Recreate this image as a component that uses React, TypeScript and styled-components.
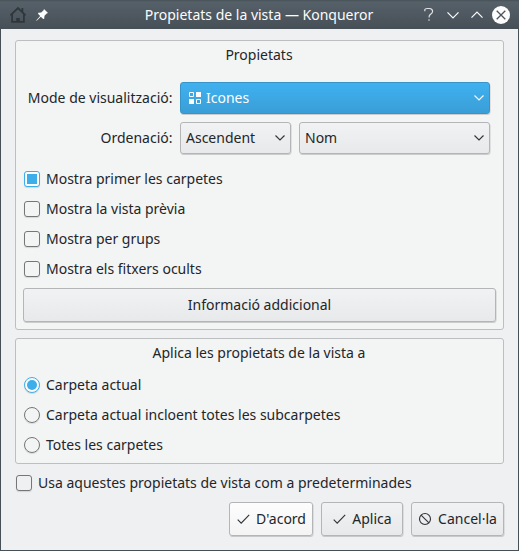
import React from "react";
import styled, { createGlobalStyle, css } from "styled-components";

const GlobalStyle = createGlobalStyle`
  * { box-sizing: border-box; }
  body { margin: 0; }
  svg { display: block; flex: none; }
`;

const Window = styled.div`
  width: 519px;
  height: 551px;
  display: flex;
  flex-direction: column;
  background: #eff0f1;
  border: 1px solid #475057;
  border-top: 0;
  font: 14px/20px "Noto Sans", sans-serif;
  color: #232629;
  white-space: nowrap;
`;

const TitleBar = styled.header`
  height: 29px;
  margin: 0 -1px;
  padding: 0 9px;
  display: grid;
  grid-template-columns: 42px 1fr 90px;
  align-items: center;
  background: linear-gradient(#475057 0, #566069 2px, #475057 28px);
  color: #fcfcfc;
`;

const TitleIcons = styled.div`
  display: flex;
  align-items: center;
  gap: 7px;
`;

const TitleText = styled.div`
  text-align: center;
  padding-left: 47px;
`;

const WindowControls = styled.div`
  display: flex;
  align-items: center;
  justify-content: flex-end;
  gap: 6px;
`;

const Content = styled.main`
  padding: 11px 14px 0;
  display: flex;
  flex-direction: column;
`;

const Group = styled.section<{ $height: number }>`
  height: ${(p) => p.$height}px;
  margin-bottom: 8px;
  padding: 4px 7px 0;
  background: #f3f4f4;
  border: 1px solid #bcbec0;
  border-radius: 3px;
`;

const GroupTitle = styled.div`
  text-align: center;
  height: 20px;
  padding-right: 1px;
`;

const Form = styled.div`
  display: grid;
  grid-template-columns: 150px 310px;
  column-gap: 7px;
  row-gap: 8px;
  margin: 17px 0 10px;
`;

const Label = styled.label`
  text-align: right;
  line-height: 32px;
  padding-right: 0.5px;
`;

const ComboRow = styled.div`
  display: flex;
  gap: 8px;
`;

const raised = css`
  border: 1px solid #b3b5b6;
  border-radius: 3px;
  background: linear-gradient(#f1f2f3, #e8e9ea);
  box-shadow: 0.5px 1px 0.5px rgba(0, 0, 0, 0.16);
  font: inherit;
  color: inherit;
  display: flex;
  align-items: center;
`;

const Combo = styled.button<{ $width: number; $active?: boolean }>`
  ${raised}
  width: ${(p) => p.$width}px;
  height: 32px;
  padding: 0 5px;
  ${(p) =>
    p.$active &&
    css`
      padding-left: 8px;
      border-color: #3793c8;
      background: linear-gradient(#3fb1f0, #3a9ed7);
      color: #fcfcfc;
    `}
`;

const ComboText = styled.span`
  flex: 1;
  text-align: left;
`;

const ModeIcon = styled.svg`
  margin-right: 5px;
`;

const Option = styled.label<{ $outer?: boolean }>`
  height: ${(p) => (p.$outer ? 22 : 30)}px;
  padding-left: 1px;
  display: flex;
  align-items: center;
  gap: 6px;
`;

const Indicator = styled.span<{ $on?: boolean; $round?: boolean }>`
  width: 16px;
  height: 16px;
  flex: none;
  display: grid;
  place-items: center;
  border: 1px solid ${(p) => (p.$on ? "#3daee9" : "#747678")};
  border-radius: ${(p) => (p.$round ? "50%" : "3px")};
  background: ${(p) => (p.$on ? "#fafcfd" : "transparent")};
  box-shadow: 0 1px 1px rgba(0, 0, 0, 0.12);
  &::after {
    content: "";
    width: 10px;
    height: 10px;
    border-radius: ${(p) => (p.$round ? "50%" : "0")};
    background: ${(p) => (p.$on ? "#3daee9" : "transparent")};
  }
`;

const Button = styled.button<{ $width: number; $default?: boolean }>`
  ${raised}
  width: ${(p) => p.$width}px;
  height: 34px;
  padding: 0;
  justify-content: center;
  gap: 6px;
  ${(p) =>
    p.$default &&
    css`
      background: linear-gradient(#fdfdfd, #f4f4f5);
    `}
`;

const Radios = styled.div`
  margin-top: 7px;
`;

const Footer = styled.footer<{ $top: number }>`
  display: flex;
  justify-content: flex-end;
  gap: 8px;
  margin-top: ${(p) => p.$top}px;
`;

const HomeIcon = () => (
  <svg width="18" height="18" viewBox="0 0 18 18" fill="none" stroke="#30373c" strokeWidth="1.8">
    <path d="M1.4 9.4 9 2l7.6 7.4M3.1 8.6v7.3h11.8V8.6M13.4 2v4" />
    <path d="M7.2 16v-4h3.6v4z" fill="#30373c" stroke="none" />
  </svg>
);

const PinIcon = () => (
  <svg width="16" height="16" viewBox="0 0 16 16" fill="#fcfcfc">
    <path d="M10 2 14 6 12.7 6.4 10.5 8.8 10.2 11.7 9.2 12 6.8 9.7 3.2 13.2 2 14 2.8 12.7 6.2 9.1 4 6.8 4.3 5.7 7.2 5.5 9.6 3.3Z" />
  </svg>
);

const HelpIcon = () => (
  <svg width="18" height="18" viewBox="0 0 18 18" fill="none" stroke="#dfe1e2" strokeWidth="1.2">
    <path d="M4.8 5.3V3.6Q5.2 2.6 7 2.5h2.4q3.2.2 3.2 2.8 0 1.6-1.7 2.8L9.6 9.2q-.5.5-.5 2.3" />
    <path d="M8 14h2" stroke="#8c949a" strokeWidth="2" />
  </svg>
);

const Arrow = ({ up, color = "#fcfcfc" }: { up?: boolean; color?: string }) => (
  <svg width="18" height="18" viewBox="0 0 18 18" fill="none" stroke={color} strokeWidth="1.2">
    <path d={up ? "M3.5 11.7 9 6.2l5.5 5.5" : "M3.5 6.3 9 11.8l5.5-5.5"} />
  </svg>
);

const CloseIcon = () => (
  <svg width="18" height="18" viewBox="0 0 18 18">
    <circle cx="9" cy="9" r="9" fill="#fcfcfc" />
    <path d="m4.7 4.7 8.6 8.6m0-8.6-8.6 8.6" stroke="#4b545c" strokeWidth="1.3" />
  </svg>
);

const Chevron = ({ color = "#31363b" }: { color?: string }) => (
  <svg width="10" height="8" viewBox="0 0 10 8" fill="none" stroke={color} strokeWidth="1.15">
    <path d="M.5 1.5 5 6l4.5-4.5" />
  </svg>
);

const GridIcon = () => (
  <ModeIcon width="12" height="12" viewBox="0 0 12 12" fill="#fcfcfc">
    <path d="M7 0h5v5H7zM0 7h5v5H0z" />
    <path d="M.5.5h4v4h-4zM7.5 7.5h4v4h-4z" fill="none" stroke="#fcfcfc" />
  </ModeIcon>
);

const CheckIcon = () => (
  <svg width="14" height="14" viewBox="0 0 14 14" fill="none" stroke="#31363b" strokeWidth="1.2">
    <path d="m1.7 7.6 3.5 3.5 8-8.2" />
  </svg>
);

const CancelIcon = () => (
  <svg width="14" height="14" viewBox="0 0 14 14" fill="none" stroke="#31363b" strokeWidth="1.15">
    <circle cx="7" cy="7" r="5.5" />
    <path d="m3.1 3.1 7.8 7.8" />
  </svg>
);

const displayOptions = [
  { label: "Mostra primer les carpetes", on: true },
  { label: "Mostra la vista prèvia" },
  { label: "Mostra per grups" },
  { label: "Mostra els fitxers ocults" },
];

const scopes = [
  { label: "Carpeta actual", on: true },
  { label: "Carpeta actual incloent totes les subcarpetes" },
  { label: "Totes les carpetes" },
];

export default function App() {
  return (
    <>
      <GlobalStyle />
      <Window>
        <TitleBar>
          <TitleIcons>
            <HomeIcon />
            <PinIcon />
          </TitleIcons>
          <TitleText>Propietats de la vista — Konqueror</TitleText>
          <WindowControls>
            <HelpIcon />
            <Arrow />
            <Arrow up />
            <CloseIcon />
          </WindowControls>
        </TitleBar>
        <Content>
          <Group $height={290}>
            <GroupTitle>Propietats</GroupTitle>
            <Form>
              <Label>Mode de visualització:</Label>
              <Combo $width={310} $active>
                <GridIcon />
                <ComboText>Icones</ComboText>
                <Chevron color="#fcfcfc" />
              </Combo>
              <Label>Ordenació:</Label>
              <ComboRow>
                <Combo $width={111}>
                  <ComboText>Ascendent</ComboText>
                  <Chevron />
                </Combo>
                <Combo $width={191}>
                  <ComboText>Nom</ComboText>
                  <Chevron />
                </Combo>
              </ComboRow>
            </Form>
            {displayOptions.map((o) => (
              <Option key={o.label}>
                <Indicator $on={o.on} />
                {o.label}
              </Option>
            ))}
            <Footer $top={4}>
              <Button $width={473}>Informació addicional</Button>
            </Footer>
          </Group>
          <Group $height={126}>
            <GroupTitle>Aplica les propietats de la vista a</GroupTitle>
            <Radios>
              {scopes.map((s) => (
                <Option key={s.label}>
                  <Indicator $round $on={s.on} />
                  {s.label}
                </Option>
              ))}
            </Radios>
          </Group>
          <Option $outer>
            <Indicator />
            Usa aquestes propietats de vista com a predeterminades
          </Option>
          <Footer $top={8}>
            <Button $width={84} $default>
              <CheckIcon />
              D'acord
            </Button>
            <Button $width={82}>
              <CheckIcon />
              Aplica
            </Button>
            <Button $width={93}>
              <CancelIcon />
              Cancel·la
            </Button>
          </Footer>
        </Content>
      </Window>
    </>
  );
}
